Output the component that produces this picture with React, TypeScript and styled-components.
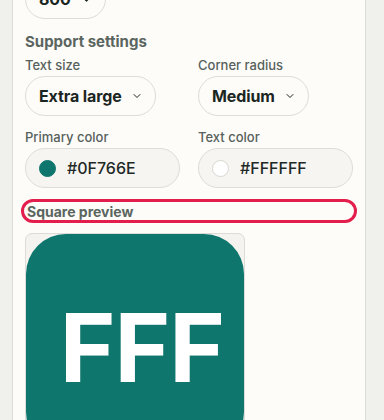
import React from 'react';
import styled, { createGlobalStyle } from 'styled-components';
import { ChevronDown } from 'lucide-react';

const GlobalStyle = createGlobalStyle`
  html, body {
    margin: 0;
    padding: 0;
    background: #f0f0ec;
    font-family: Inter, "Noto Sans", "Liberation Sans", sans-serif;
    overflow: hidden;
  }
`;

const Page = styled.div`
  padding: 0 18px 0 12px;
  margin-top: -30px;
`;

const Panel = styled.section`
  background: #fdfcf9;
  border: 1px solid #dcdbd5;
  padding: 8px 12px 24px;
  display: flex;
  flex-direction: column;
`;

const SectionTitle = styled.h3`
  margin: 13px 0 5px;
  font-size: 15px;
  line-height: 20px;
  font-weight: 700;
  color: #5a6560;
`;

const Grid = styled.div`
  display: grid;
  grid-template-columns: 1fr 1fr;
  column-gap: 18px;
  row-gap: 13px;
`;

const Field = styled.div`
  display: flex;
  flex-direction: column;
  align-items: flex-start;
  gap: 3px;
`;

const Label = styled.span`
  font-size: 13px;
  line-height: 16px;
  font-weight: 500;
  color: #56615c;
`;

const SelectPill = styled.button`
  display: inline-flex;
  align-items: center;
  gap: 9px;
  height: 40px;
  padding: 0 12px 0 13px;
  border: 1px solid #dedcd6;
  border-radius: 20px;
  background: #fdfcf9;
  font-family: inherit;
  font-size: 16px;
  font-weight: 700;
  letter-spacing: -0.1px;
  color: #1b2522;
  cursor: pointer;
`;

const ColorPill = styled.div`
  display: flex;
  align-items: center;
  gap: 11px;
  width: 100%;
  box-sizing: border-box;
  height: 40px;
  padding: 0 13px;
  border: 1px solid #dedcd6;
  border-radius: 20px;
  background: #f6f5f1;
  font-size: 16px;
  font-weight: 500;
  color: #1f2926;
`;

const Swatch = styled.span<{ $color: string }>`
  width: 17px;
  height: 17px;
  border-radius: 50%;
  background: ${({ $color }) => $color};
  border: 1px solid ${({ $color }) => ($color === '#FFFFFF' ? '#d8d6d0' : $color)};
  box-sizing: border-box;
  flex-shrink: 0;
`;

const PreviewHeading = styled.div`
  position: relative;
  margin: 15px 0 13px;
  padding-left: 2px;
  font-size: 14px;
  line-height: 17px;
  font-weight: 700;
  color: #5a6560;
`;

const Highlight = styled.span`
  position: absolute;
  left: -4px;
  right: -4px;
  top: -4px;
  bottom: -3px;
  border: 3.5px solid #e31d4c;
  border-radius: 12px;
  pointer-events: none;
`;

const PreviewFrame = styled.div`
  width: 220px;
  box-sizing: border-box;
  border: 1px solid #dddbd5;
  border-radius: 7px;
  background: #f4f3ef;
  overflow: hidden;
`;

const Tile = styled.div<{ $bg: string; $fg: string }>`
  height: 218px;
  border-radius: 40px;
  background: ${({ $bg }) => $bg};
  color: ${({ $fg }) => $fg};
  display: flex;
  align-items: center;
  justify-content: center;
  font-size: 95px;
  font-weight: 700;
  letter-spacing: -1px;
  padding: 8px 0 0 14px;
  box-sizing: border-box;
`;

const TopPill = styled(SelectPill)`
  align-self: flex-start;
`;

export default function App() {
  return (
    <>
      <GlobalStyle />
      <Page>
        <Panel>
          <TopPill>
            800 <ChevronDown size={13} strokeWidth={2} />
          </TopPill>
          <SectionTitle>Support settings</SectionTitle>
          <Grid>
            <Field>
              <Label>Text size</Label>
              <SelectPill>
                Extra large <ChevronDown size={12} strokeWidth={2} />
              </SelectPill>
            </Field>
            <Field>
              <Label>Corner radius</Label>
              <SelectPill>
                Medium <ChevronDown size={12} strokeWidth={2} />
              </SelectPill>
            </Field>
            <Field>
              <Label>Primary color</Label>
              <ColorPill>
                <Swatch $color="#0F766E" />
                #0F766E
              </ColorPill>
            </Field>
            <Field>
              <Label>Text color</Label>
              <ColorPill>
                <Swatch $color="#FFFFFF" />
                #FFFFFF
              </ColorPill>
            </Field>
          </Grid>
          <PreviewHeading>
            Square preview
            <Highlight />
          </PreviewHeading>
          <PreviewFrame>
            <Tile $bg="#0F766E" $fg="#FFFFFF">FFF</Tile>
          </PreviewFrame>
        </Panel>
      </Page>
    </>
  );
}
